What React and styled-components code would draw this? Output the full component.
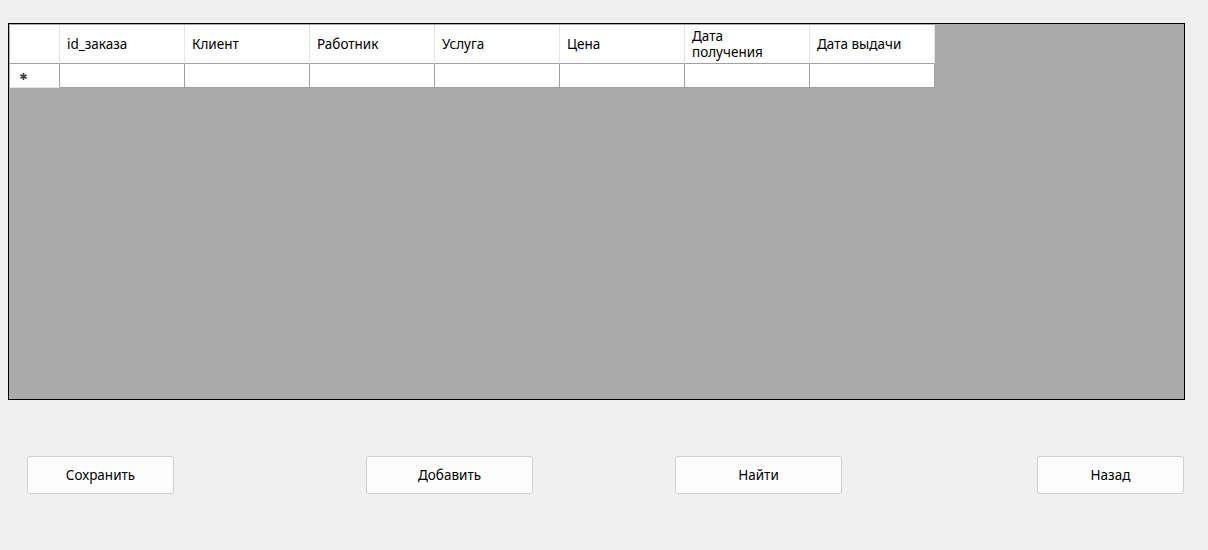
import React from 'react';
import styled, { createGlobalStyle } from 'styled-components';

const GlobalStyle = createGlobalStyle`
  html, body {
    margin: 0;
    padding: 0;
    background: #f0f0f0;
  }
  body {
    font-family: "Noto Sans", "Open Sans", sans-serif;
    color: #000;
  }
`;

const Window = styled.div`
  width: 1208px;
  height: 550px;
  background: #f0f0f0;
  padding: 23px 0 0 8px;
  box-sizing: border-box;
`;

const Grid = styled.div`
  width: 1177px;
  height: 377px;
  box-sizing: border-box;
  border: 1px solid #000;
  background: #ababab;
  padding: 1px;
  display: flex;
  flex-direction: column;
  align-items: flex-start;
`;

const Row = styled.div`
  display: flex;
  height: ${p => p.$h}px;
`;

const HeaderCell = styled.div`
  width: ${p => p.$w}px;
  box-sizing: border-box;
  background: #fff;
  border-right: 1px solid #e4e4e4;
  border-bottom: 1px solid #a0a0a0;
  padding: 0 7px;
  display: flex;
  align-items: center;
  font-size: 13.5px;
  line-height: 16px;
`;

const RowHeader = styled.div`
  width: 50px;
  box-sizing: border-box;
  background: #fff;
  border-right: 1px solid #a0a0a0;
  border-bottom: 1px solid #e4e4e4;
  padding: 2px 0 0 10px;
  display: flex;
  align-items: center;
`;

const Cell = styled.div`
  width: 125px;
  box-sizing: border-box;
  background: #fff;
  border-right: 1px solid #a0a0a0;
  border-bottom: 1px solid #a0a0a0;
`;

const ButtonBar = styled.div`
  display: flex;
  margin-top: 56px;
`;

const Button = styled.button`
  width: ${p => p.$w}px;
  height: 38px;
  margin-left: ${p => p.$ml}px;
  box-sizing: border-box;
  border: 1px solid #cfcfcf;
  border-radius: 3px;
  background: #fdfdfd;
  font-family: "Noto Sans", "Open Sans", sans-serif;
  font-size: 13.5px;
  color: #000;
  padding: 0;
  cursor: pointer;
`;

const NewRowStar = () => (
  <svg width="7" height="7" viewBox="0 0 7 7">
    <g stroke="#3c3c3c" strokeWidth="1.6" strokeLinecap="butt">
      <line x1="3.5" y1="0" x2="3.5" y2="7" />
      <line x1="0.5" y1="1.8" x2="6.5" y2="5.2" />
      <line x1="0.5" y1="5.2" x2="6.5" y2="1.8" />
    </g>
  </svg>
);

const columns = [
  'id_заказа',
  'Клиент',
  'Работник',
  'Услуга',
  'Цена',
  ['Дата', 'получения'],
  'Дата выдачи',
];

const buttons = [
  { label: 'Сохранить', w: 147, ml: 19 },
  { label: 'Добавить', w: 167, ml: 192 },
  { label: 'Найти', w: 167, ml: 142 },
  { label: 'Назад', w: 147, ml: 195 },
];

export default function App() {
  return (
    <>
      <GlobalStyle />
      <Window>
        <Grid>
          <Row $h={39}>
            <HeaderCell $w={50} />
            {columns.map((c, i) => (
              <HeaderCell key={i} $w={125}>
                {Array.isArray(c) ? (
                  <span>
                    {c[0]}
                    <br />
                    {c[1]}
                  </span>
                ) : (
                  c
                )}
              </HeaderCell>
            ))}
          </Row>
          <Row $h={24}>
            <RowHeader>
              <NewRowStar />
            </RowHeader>
            {columns.map((c, i) => (
              <Cell key={i} />
            ))}
          </Row>
        </Grid>
        <ButtonBar>
          {buttons.map(b => (
            <Button key={b.label} $w={b.w} $ml={b.ml}>
              {b.label}
            </Button>
          ))}
        </ButtonBar>
      </Window>
    </>
  );
}
